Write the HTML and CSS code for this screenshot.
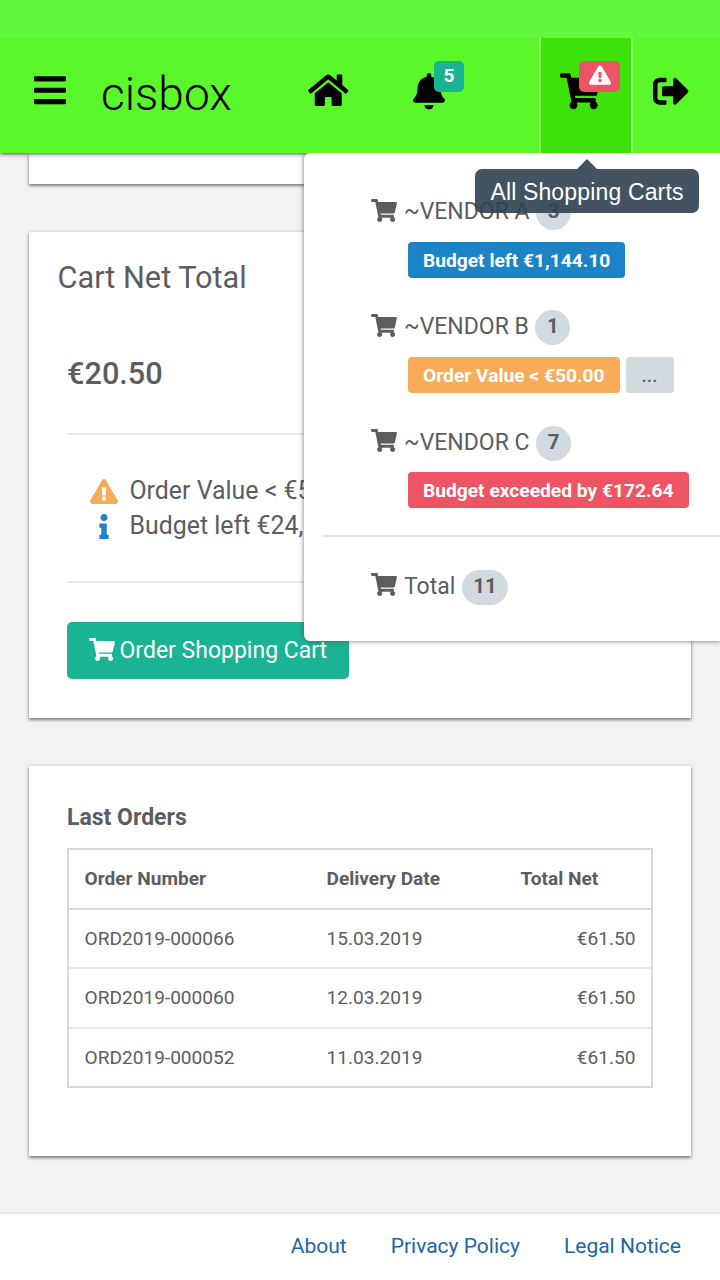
FILE: index.html
```html
<!DOCTYPE html>
<html lang="en">
<head>
<meta charset="UTF-8" />
<meta name="viewport" content="width=device-width, initial-scale=1.0" />
<title>cisbox</title>
<link rel="stylesheet" href="styles.css">
</head>
<body>

<svg class="sprite" aria-hidden="true">
<symbol id="bars" viewBox="0 0 448 512"><path d="M16 132h416c8.837 0 16-7.163 16-16V76c0-8.837-7.163-16-16-16H16C7.163 60 0 67.163 0 76v40c0 8.837 7.163 16 16 16zm0 160h416c8.837 0 16-7.163 16-16v-40c0-8.837-7.163-16-16-16H16c-8.837 0-16 7.163-16 16v40c0 8.837 7.163 16 16 16zm0 160h416c8.837 0 16-7.163 16-16v-40c0-8.837-7.163-16-16-16H16c-8.837 0-16 7.163-16 16v40c0 8.837 7.163 16 16 16z"/></symbol>
<symbol id="home" viewBox="0 0 576 512"><path d="M280.37 148.26L96 300.11V464a16 16 0 0 0 16 16l112.06-.29a16 16 0 0 0 15.92-16V368a16 16 0 0 1 16-16h64a16 16 0 0 1 16 16v95.64a16 16 0 0 0 16 16.05L464 480a16 16 0 0 0 16-16V300L295.67 148.26a12.19 12.19 0 0 0-15.3 0zM571.6 251.47L488 182.56V44.05a12 12 0 0 0-12-12h-56a12 12 0 0 0-12 12v72.61L318.47 43a48 48 0 0 0-61 0L4.34 251.47a12 12 0 0 0-1.6 16.9l25.5 31A12 12 0 0 0 45.15 301l235.22-193.74a12.19 12.19 0 0 1 15.3 0L530.9 301a12 12 0 0 0 16.9-1.6l25.5-31a12 12 0 0 0-1.7-16.93z"/></symbol>
<symbol id="bell" viewBox="0 0 448 512"><path d="M224 512c35.32 0 63.97-28.65 63.97-64H160.03c0 35.35 28.65 64 63.97 64zm215.39-149.71c-19.32-20.76-55.47-51.99-55.47-154.29 0-77.7-54.48-139.9-127.94-155.16V32c0-17.67-14.32-32-31.98-32s-31.98 14.33-31.98 32v20.84C118.56 68.1 64.08 130.3 64.08 208c0 102.3-36.15 133.53-55.47 154.29-6 6.45-8.66 14.16-8.61 21.71.11 16.4 12.98 32 32.1 32h383.8c19.12 0 32-15.6 32.1-32 .05-7.55-2.61-15.27-8.61-21.71z"/></symbol>
<symbol id="cart" viewBox="0 0 576 512"><path d="M528.12 301.319l47.273-208C578.806 78.301 567.391 64 551.99 64H159.208l-9.166-44.81C147.758 8.021 137.93 0 126.529 0H24C10.745 0 0 10.745 0 24v16c0 13.255 10.745 24 24 24h69.883l70.248 343.435C147.325 417.1 136 435.222 136 456c0 30.928 25.072 56 56 56s56-25.072 56-56c0-15.674-6.447-29.835-16.824-40h209.647C430.447 426.165 424 440.326 424 456c0 30.928 25.072 56 56 56s56-25.072 56-56c0-22.172-12.888-41.332-31.579-50.405l5.517-24.276c3.413-15.018-8.002-29.319-23.403-29.319H218.117l-6.545-32h293.145c11.206 0 20.92-7.754 23.403-18.681z"/></symbol>
<symbol id="warning" viewBox="0 0 576 512"><path d="M569.517 440.013C587.975 472.007 564.806 512 527.94 512H48.054c-36.937 0-59.999-40.055-41.577-71.987L246.423 23.985c18.467-32.009 64.72-31.951 83.154 0l239.94 416.028zM288 354c-25.405 0-46 20.595-46 46s20.595 46 46 46 46-20.595 46-46-20.595-46-46-46zm-43.673-165.346l7.418 136c.347 6.364 5.609 11.346 11.982 11.346h48.546c6.373 0 11.635-4.982 11.982-11.346l7.418-136c.375-6.874-5.098-12.654-11.982-12.654h-63.383c-6.884 0-12.356 5.78-11.981 12.654z"/></symbol>
<symbol id="info" viewBox="0 0 192 512"><path d="M20 424.229h20V279.771H20c-11.046 0-20-8.954-20-20V212c0-11.046 8.954-20 20-20h112c11.046 0 20 8.954 20 20v212.229h20c11.046 0 20 8.954 20 20V492c0 11.046-8.954 20-20 20H20c-11.046 0-20-8.954-20-20v-47.771c0-11.046 8.954-20 20-20zM96 0C56.235 0 24 32.235 24 72s32.235 72 72 72 72-32.235 72-72S135.764 0 96 0z"/></symbol>
<symbol id="signout" viewBox="0 0 512 512"><path d="M497 273L329 441c-15 15-41 4.5-41-17v-96H152c-13.3 0-24-10.7-24-24v-96c0-13.3 10.7-24 24-24h136V88c0-21.4 25.9-32 41-17l168 168c9.3 9.4 9.3 24.6 0 34zM192 436v-40c0-6.6-5.4-12-12-12H96c-17.7 0-32-14.3-32-32V160c0-17.7 14.3-32 32-32h84c6.6 0 12-5.4 12-12V76c0-6.6-5.4-12-12-12H96c-53 0-96 43-96 96v192c0 53 43 96 96 96h84c6.6 0 12-5.4 12-12z"/></symbol>
</svg>

<header class="header">
<div class="status-bar"></div>
<nav class="navbar">
<a class="nav-link nav-menu"><svg class="icon icon-narrow icon-raised"><use href="#bars"/></svg></a>
<span class="brand">cisbox</span>
<a class="nav-link nav-home"><svg class="icon icon-raised"><use href="#home"/></svg></a>
<a class="nav-link nav-bell"><svg class="icon icon-narrow"><use href="#bell"/></svg><span class="counter">5</span></a>
<a class="nav-link nav-cart active"><svg class="icon"><use href="#cart"/></svg><span class="counter counter-danger"><svg class="counter-icon"><use href="#warning"/></svg></span></a>
<a class="nav-link nav-logout"><svg class="icon icon-square"><use href="#signout"/></svg></a>
</nav>
</header>

<!-- all shopping carts menu -->
<div class="dropdown">
<div class="vendor">
<div class="vendor-name"><svg class="cart-icon"><use href="#cart"/></svg><span class="name">~VENDOR A</span><span class="badge">3</span></div>
<div class="labels"><span class="label label-info">Budget left €1,144.10</span></div>
</div>
<div class="vendor">
<div class="vendor-name"><svg class="cart-icon"><use href="#cart"/></svg><span class="name">~VENDOR B</span><span class="badge">1</span></div>
<div class="labels"><span class="label label-warning">Order Value &lt; €50.00</span><span class="label label-more">...</span></div>
</div>
<div class="vendor">
<div class="vendor-name"><svg class="cart-icon"><use href="#cart"/></svg><span class="name">~VENDOR C</span><span class="badge">7</span></div>
<div class="labels"><span class="label label-danger">Budget exceeded by €172.64</span></div>
</div>
<div class="divider"></div>
<div class="vendor-name total"><svg class="cart-icon"><use href="#cart"/></svg><span class="name">Total</span><span class="badge">11</span></div>
</div>
<div class="tooltip">All Shopping Carts</div>

<main class="content">
<section class="card card-previous"></section>

<section class="card card-cart">
<h2 class="card-title">Cart Net Total</h2>
<div class="card-body">
<div class="net-total">€20.50</div>
<ul class="notes">
<li><span class="note-icon"><svg class="note-warning"><use href="#warning"/></svg></span>Order Value &lt; €50.00</li>
<li><span class="note-icon"><svg class="note-info"><use href="#info"/></svg></span>Budget left €24,</li>
</ul>
<button class="order-button"><svg class="cart-icon"><use href="#cart"/></svg>Order Shopping Cart</button>
</div>
</section>

<section class="card card-orders">
<h3 class="orders-title">Last Orders</h3>
<table class="orders">
<thead>
<tr><th class="col-number">Order Number</th><th class="col-date">Delivery Date</th><th>Total Net</th></tr>
</thead>
<tbody>
<tr><td>ORD2019-000066</td><td>15.03.2019</td><td class="amount">€61.50</td></tr>
<tr><td>ORD2019-000060</td><td>12.03.2019</td><td class="amount">€61.50</td></tr>
<tr><td>ORD2019-000052</td><td>11.03.2019</td><td class="amount">€61.50</td></tr>
</tbody>
</table>
</section>
</main>

<footer class="footer">
<a>About</a>
<a>Privacy Policy</a>
<a>Legal Notice</a>
</footer>

</body>
</html>
```

FILE: styles.css
```css
* { box-sizing: border-box; }

html, body { margin: 0; padding: 0; height: 100%; }

body {
display: flex; flex-direction: column;
font-family: Roboto, "Liberation Sans", sans-serif;
font-size: 23px;
color: #5c5d5f;
background: #f2f2f2;
overflow: hidden;
position: relative;
}

svg { display: block; fill: currentColor; flex: none; }
.sprite { position: absolute; width: 0; height: 0; }

/* header */
.header {
flex: none;
position: relative; z-index: 2;
background: #5af82b;
color: #000;
box-shadow: 0 1px 4px rgba(0, 0, 0, 0.7);
}

.status-bar { height: 38px; background: #61f83e; }

.navbar { display: flex; height: 115px; }

.nav-link {
display: flex; align-items: flex-start; justify-content: center;
padding-top: 35px;
position: relative;
}

.icon { width: 40.5px; height: 36.5px; }
.icon-narrow { width: 32px; }
.icon-square { width: 36px; }
.icon-raised { margin-top: -1.5px; }

.nav-menu { width: 100px; }
.brand {
width: 182px;
padding: 29px 0 0 1px;
font-size: 46px; line-height: 54px; font-weight: 300;
}
.nav-home { width: 93px; }
.nav-bell { width: 93px; margin-left: 7px; }
.nav-cart { width: 94px; margin-left: 64px; }
.nav-cart.active {
justify-content: flex-start;
padding-left: 19px;
background: #3ee20b;
border-left: 2px solid #8cf36e;
border-right: 2px solid #8cf36e;
}
.nav-logout { width: 75px; }

.counter {
position: absolute; top: 23px; left: 52px;
width: 30px; height: 31px;
border-radius: 5px;
background: #1ab394; color: #fff;
font-size: 19px; line-height: 30px; font-weight: 700;
text-align: center;
}
.counter-danger {
left: 38px; width: 41px;
background: #ed5565;
display: flex; justify-content: center; padding-top: 4px;
}
.counter-icon { width: 22px; height: 20px; }

/* dropdown */
.dropdown {
position: absolute; top: 153px; left: 304px; right: 0; z-index: 3;
height: 488px;
padding: 39px 0 0 19px;
background: #fff;
border-radius: 6px 0 0 6px;
box-shadow: 0 0 5px rgba(60, 70, 85, 0.75);
clip-path: inset(0 0 -8px -8px);
}

.vendor { height: 115.3px; padding-left: 48px; }
.vendor-name { display: flex; height: 38px; }
.vendor-name .name { margin-left: 7px; line-height: 39px; }

.cart-icon { width: 26px; height: 23px; }
.vendor-name .cart-icon { margin-top: 6.5px; }

.badge {
height: 35px; min-width: 35px;
margin: 3px 0 0 6.5px;
padding: 0 11.5px;
border-radius: 18px;
background: #d1dade; color: #5c5d5f;
font-size: 20.5px; line-height: 33px; font-weight: 700;
text-align: center;
}

.labels { display: flex; gap: 6px; padding: 11.6px 0 0 37px; }
.label {
height: 36px;
padding: 0 15px;
border-radius: 4px;
color: #fff;
font-size: 19.2px; line-height: 37px; font-weight: 700;
white-space: nowrap;
}
.label-info { background: #1c84c6; }
.label-warning { background: #f8ac59; }
.label-danger { background: #ed5565; }
.label-more { padding: 0 16px; background: #d1dade; color: #5c5d5f; font-weight: 500; }

.divider { height: 2px; margin-top: -3px; background: #dfe1e3; }
.total { padding: 0 0 0 48px; margin-top: 30px; }

.tooltip {
position: absolute; top: 169px; left: 475px; z-index: 4;
width: 224px; height: 44px;
border-radius: 7px;
background: rgba(47, 64, 80, 0.9); color: #fff;
font-family: "Liberation Sans", sans-serif;
font-size: 23px; line-height: 46px; letter-spacing: 0.15px;
text-align: center;
}
.tooltip::before {
content: "";
position: absolute; top: -10px; left: 102px;
border: solid transparent; border-width: 0 10px 10px;
border-bottom-color: rgba(47, 64, 80, 0.9);
}

/* cards */
.content { flex: 1; padding: 0 29px; }

.card {
background: #fff;
margin-bottom: 48px;
box-shadow: 0 2px 3px rgba(0, 0, 0, 0.45), 0 0 4px rgba(0, 0, 0, 0.12);
}
.card-previous { height: 31px; }

.card-cart { height: 486px; padding-top: 28px; }
.card-title {
margin: 0 0 0 28.5px;
font-size: 30.7px; line-height: 36px; font-weight: 400;
}
.card-body { padding: 0 38px; }
.net-total {
height: 139px;
padding-top: 60px;
font-size: 30.7px; line-height: 36px; font-weight: 500;
border-bottom: 2px solid #e7e8e9;
}

.notes {
list-style: none; margin: 0;
height: 148px;
padding: 38px 0 0 22px;
font-size: 24.9px; line-height: 35px;
border-bottom: 2px solid #e7e8e9;
}
.notes li { display: flex; align-items: center; white-space: nowrap; }
.note-icon { width: 30px; margin-right: 10.5px; padding-top: 2px; display: flex; justify-content: center; }
.note-warning { width: 28px; height: 25px; color: #f8ac59; }
.note-info { width: 10px; height: 25px; color: #1c84c6; }

.order-button {
display: flex; align-items: flex-start; gap: 5px;
height: 57px; width: 282px;
margin-top: 39px;
padding: 16px 0 0 21.5px;
border: 0; border-radius: 5px;
background: #1ab394; color: #fff;
font-family: inherit; font-size: 23px; line-height: 26px;
white-space: nowrap;
}

/* orders */
.card-orders { height: 390px; margin-bottom: 0; padding: 38px; }
.orders-title { margin: 0; font-size: 23px; line-height: 28px; font-weight: 700; }

.orders {
width: 586px;
margin-top: 16px;
table-layout: fixed;
border-collapse: separate; border-spacing: 0;
border: 2px solid #d8d9db;
font-size: 19.1px;
}
.orders th, .orders td {
height: 59.5px;
padding: 0 15.5px;
text-align: left;
}
.orders th { font-weight: 700; border-bottom: 2px solid #d8d9db; }
.orders td { border-bottom: 2px solid #e7e8e9; }
.orders tbody tr:last-child td { border-bottom: 0; height: 57.5px; }
.col-number { width: 242px; }
.col-date { width: 194px; }
.orders .amount { text-align: right; }

.footer {
flex: none;
display: flex; justify-content: flex-end; gap: 44px;
height: 68px;
padding: 19px 39px 0 0;
border-top: 2px solid #e3e4e5;
background: #fff; color: #2166a5;
font-size: 21px; line-height: 27px;
}
```
